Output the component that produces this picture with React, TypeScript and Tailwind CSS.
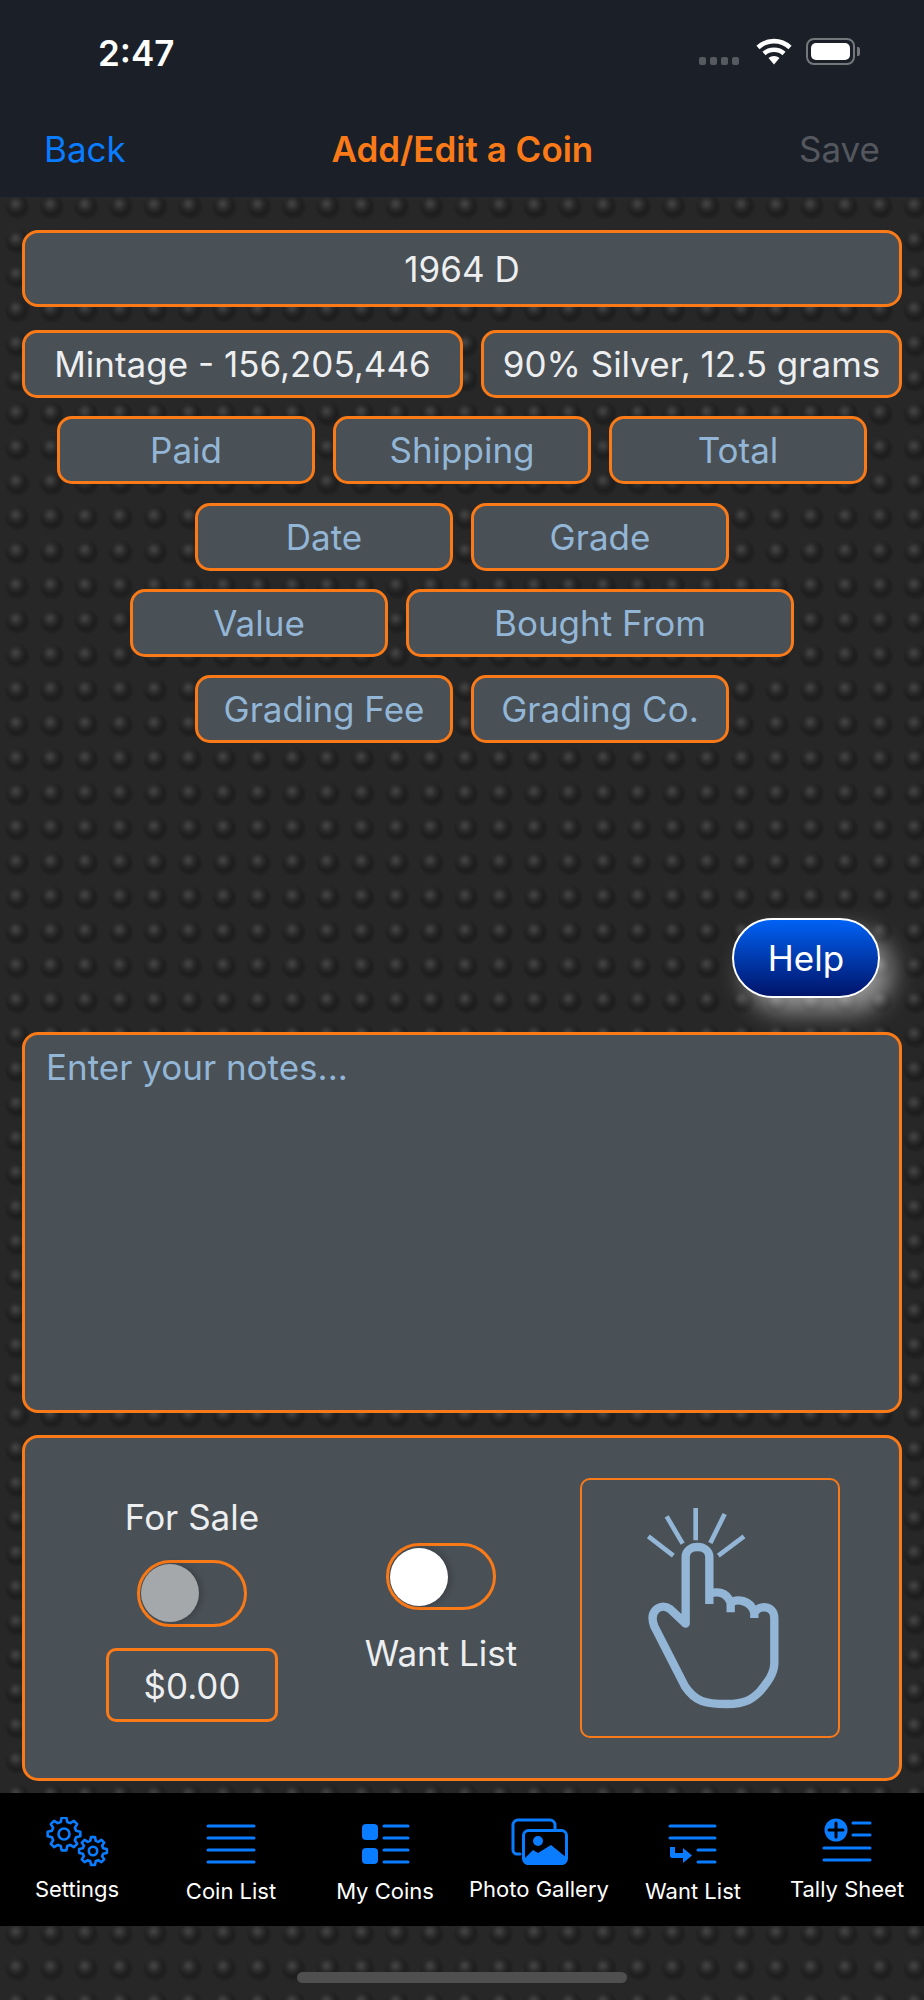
const tabs = ['Settings', 'Coin List', 'My Coins', 'Photo Gallery', 'Want List', 'Tally Sheet'];

// gear outline with round joins, used twice in the Settings tab
function gearPath(cx: number, cy: number, outer: number, inner: number, teeth: number) {
  const pts: string[] = [];
  const step = (Math.PI * 2) / teeth;
  for (let i = 0; i < teeth; i++) {
    const a = i * step - Math.PI / 2;
    const list: [number, number][] = [
      [inner, a - step * 0.34],
      [outer, a - step * 0.18],
      [outer, a + step * 0.18],
      [inner, a + step * 0.34],
    ];
    list.forEach(([r, t]) => pts.push(`${(cx + r * Math.cos(t)).toFixed(2)} ${(cy + r * Math.sin(t)).toFixed(2)}`));
  }
  return `M${pts.join('L')}Z`;
}

function TabIcon({ index }: { index: number }) {
  return (
    <svg width="64" height="50" viewBox="0 0 64 50" fill="none" stroke="#0a7cff" strokeWidth="3" strokeLinecap="round" strokeLinejoin="round">
      {index === 0 && (
        <>
          <path d={gearPath(19, 17, 16.5, 12.5, 8)} strokeWidth="2.6" />
          <circle cx="19" cy="17" r="5.5" strokeWidth="2.6" />
          <path d={gearPath(48, 34, 14, 10.5, 8)} strokeWidth="2.6" />
          <circle cx="48" cy="34" r="4.2" strokeWidth="2.6" />
        </>
      )}
      {index === 1 && <path d="M9 9H55M9 21H55M9 33H55M9 45H55" />}
      {index === 2 && (
        <>
          <rect x="9" y="7" width="16" height="16" rx="4" fill="#0a7cff" stroke="none" />
          <rect x="9" y="31" width="16" height="16" rx="4" fill="#0a7cff" stroke="none" />
          <path d="M31 9H55M31 21H55M31 33H55M31 45H55" />
        </>
      )}
      {index === 3 && (
        <>
          <path d="M13 37H10a4 4 0 0 1-4-4V8a5 5 0 0 1 5-5H43a5 5 0 0 1 5 5V12" />
          <rect x="16.5" y="13.5" width="43" height="33" rx="5" />
          <circle cx="31" cy="24" r="5" fill="#0a7cff" stroke="none" />
          <path d="M16 43L26 33L31 36L44 28L60 41V43a5 5 0 0 1-5 5H21a5 5 0 0 1-5-5Z" fill="#0a7cff" stroke="none" />
        </>
      )}
      {index === 4 && (
        <>
          <path d="M9 9H54M9 21H54M37 33H54M37 45H54" />
          <path d="M11.5 30V38.5H22" strokeWidth="5" strokeLinecap="butt" strokeLinejoin="round" />
          <path d="M22 31L31 38.5L22 46Z" fill="#0a7cff" stroke="none" />
        </>
      )}
      {index === 5 && (
        <>
          <circle cx="21" cy="13" r="11.5" fill="#0a7cff" stroke="none" />
          <path d="M14 13H28M21 6V20" stroke="#000" />
          <path d="M38 6H55M38 18H55M9 31H55M9 43H55" />
        </>
      )}
    </svg>
  );
}

function Field({ label, width, light }: { label: string; width: string; light?: boolean }) {
  return (
    <div className={`${width} h-[68px] flex items-center justify-center rounded-[15px] border-[3px] border-[#fb7a18] bg-[#495056] text-[35px] leading-[44px] ${light ? 'text-[#eceef0]' : 'text-[#93b6d6]'}`}>
      {label}
    </div>
  );
}

function Toggle({ knob }: { knob: string }) {
  return (
    <div className="w-[110px] h-[67px] flex items-center pl-[1px] rounded-full border-[3px] border-[#fb7a18]">
      <div className={`w-[58px] h-[58px] rounded-full shadow-[3px_0_6px_rgba(0,0,0,0.2)] ${knob}`} />
    </div>
  );
}

export default function App() {
  return (
    <div className="w-[924px] h-[2000px] overflow-hidden bg-[#272727] bg-[radial-gradient(circle_at_45%_41%,#444444_0,#393939_3px,rgba(50,50,50,0.6)_6px,transparent_10px),radial-gradient(circle_at_50%_50%,#1e1e1e_0,#1e1e1e_8px,#202020_10px,transparent_13px)] bg-size-[34.55px_34.55px] bg-position-[0px_-17.6px] font-['Inter','Liberation_Sans',sans-serif]">
      {/* Status bar + nav */}
      <header className="h-[197px] bg-[#1a1f28]">
        <div className="h-[106px] flex items-start pl-[98px] pr-[64px] pt-[29px]">
          <span className="text-[35px] leading-[48px] font-semibold text-white">2:47</span>
          <div className="ml-auto flex items-center mt-[9px]">
            <div className="flex gap-[4px] mt-[18px]">
              <span className="w-[7px] h-[8px] rounded-[2px] bg-[#565a60]" />
              <span className="w-[7px] h-[8px] rounded-[2px] bg-[#565a60]" />
              <span className="w-[7px] h-[8px] rounded-[2px] bg-[#565a60]" />
              <span className="w-[7px] h-[8px] rounded-[2px] bg-[#565a60]" />
            </div>
            <svg className="ml-[17px]" width="36" height="27" viewBox="0 0 36 27" fill="none" stroke="#fff" strokeWidth="4.6">
              <path d="M2 9.5C11 1 25 1 34 9.5" />
              <path d="M8 15.5C13.5 10.5 22.5 10.5 28 15.5" />
              <path d="M12.5 20L18 26.5L23.5 20C20.5 17.2 15.5 17.2 12.5 20Z" fill="#fff" stroke="none" />
            </svg>
            <div className="ml-[14px] w-[49px] h-[27px] p-[3px] rounded-[8px] border-2 border-[#74777b]">
              <div className="w-full h-full rounded-[5px] bg-white" />
            </div>
            <div className="ml-[2px] w-[3px] h-[9px] rounded-r-[2px] bg-[#74777b]" />
          </div>
        </div>
        <div className="h-[86px] flex items-center justify-between px-[44px] text-[35px]">
          <span className="text-[#0a7cff]">Back</span>
          <span className="font-semibold text-[#fb7a18]">Add/Edit a Coin</span>
          <span className="text-[#54585e]">Save</span>
        </div>
      </header>

      <main className="px-[22px] pt-[33px]">
        <div className="h-[77px] flex items-center justify-center rounded-[16px] border-[3px] border-[#fb7a18] bg-[#495056] text-[35px] leading-[44px] text-[#eceef0]">
          1964 D
        </div>

        <div className="mt-[23px] flex flex-col items-center gap-[18.25px]">
          <div className="w-full flex gap-[18px]">
            <Field label="Mintage - 156,205,446" width="w-[441px]" light />
            <Field label="90% Silver, 12.5 grams" width="w-[421px]" light />
          </div>
          <div className="flex gap-[18px]">
            <Field label="Paid" width="w-[258px]" />
            <Field label="Shipping" width="w-[258px]" />
            <Field label="Total" width="w-[258px]" />
          </div>
          <div className="flex gap-[18px]">
            <Field label="Date" width="w-[258px]" />
            <Field label="Grade" width="w-[258px]" />
          </div>
          <div className="flex gap-[18px]">
            <Field label="Value" width="w-[258px]" />
            <Field label="Bought From" width="w-[388px]" />
          </div>
          <div className="flex gap-[18px]">
            <Field label="Grading Fee" width="w-[258px]" />
            <Field label="Grading Co." width="w-[258px]" />
          </div>
        </div>

        <div className="mt-[175px] flex justify-end pr-[22px]">
          <div className="w-[148px] h-[80px] flex items-center justify-center rounded-full border-2 border-white bg-gradient-to-b from-[#0062f5] to-[#00146b] text-[35px] text-white shadow-[12px_14px_24px_rgba(255,255,255,0.5)]">
            Help
          </div>
        </div>

        <div className="mt-[34px] h-[381px] pt-[10px] pl-[21px] rounded-[16px] border-[3px] border-[#fb7a18] bg-[#495056] text-[35px] leading-[44px] text-[#93b6d6]">
          Enter your notes...
        </div>

        <div className="mt-[22px] h-[346px] flex items-center pl-[81px] rounded-[16px] border-[3px] border-[#fb7a18] bg-[#495056] text-[35px] text-[#eceef0]">
          <div className="w-[172px] pt-[2px] flex flex-col items-center">
            <span className="h-[40px] leading-[40px]">For Sale</span>
            <div className="mt-[23px]">
              <Toggle knob="bg-[#a4a8aa]" />
            </div>
            <div className="mt-[21px] w-[172px] h-[74px] pt-[3px] flex items-center justify-center rounded-[10px] border-[3px] border-[#fb7a18] leading-[44px]">
              $0.00
            </div>
          </div>
          <div className="ml-[83px] w-[160px] flex flex-col items-center">
            <Toggle knob="bg-white" />
            <span className="mt-[23px] h-[40px] leading-[40px]">Want List</span>
          </div>
          <div className="ml-[59px] w-[260px] h-[260px] rounded-[10px] border-2 border-[#fb7a18]">
            <svg className="-m-[2px]" width="260" height="260" viewBox="30 25 780 780" fill="none" stroke="#93b6d6">
              <path
                strokeWidth="25"
                strokeLinejoin="round"
                d="M418 403V262C418 222 347 222 347 262V462L300 418C270 398 235 425 253 470L345 650C375 695 405 703 470 703C530 703 550 685 570 665C595 635 613 610 613 580V445C613 405 565 405 553 430V445M553 430C545 390 495 385 482 400V428M482 400C470 365 440 365 418 372"
              />
              <path strokeWidth="14" d="M235 200L310 258M290 140L338 222M377 115V212M464 133L421 220M522 200L445 258" />
            </svg>
          </div>
        </div>
      </main>

      <nav className="mt-[12px] h-[133px] grid grid-cols-6 bg-black pt-[24px] text-white">
        {tabs.map((name, i) => (
          <div key={name} className="flex flex-col items-center">
            <TabIcon index={i} />
            <span className={`text-[22px] whitespace-nowrap leading-[28px] ${i === 0 || i === 3 || i === 5 ? 'mt-[8px]' : 'mt-[10px]'}`}>{name}</span>
          </div>
        ))}
      </nav>

      <div className="mt-[46px] mx-auto w-[330px] h-[11px] rounded-full bg-[#4f4f4f]" />
    </div>
  );
}
